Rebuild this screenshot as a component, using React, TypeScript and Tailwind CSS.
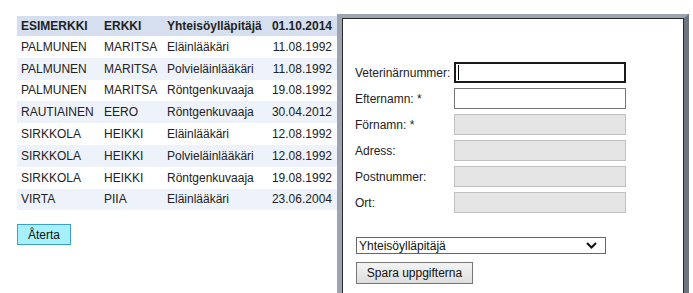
import React from 'react';

const rows = [
  ['PALMUNEN', 'MARITSA', 'Eläinlääkäri', '11.08.1992'],
  ['PALMUNEN', 'MARITSA', 'Polvieläinlääkäri', '11.08.1992'],
  ['PALMUNEN', 'MARITSA', 'Röntgenkuvaaja', '19.08.1992'],
  ['RAUTIAINEN', 'EERO', 'Röntgenkuvaaja', '30.04.2012'],
  ['SIRKKOLA', 'HEIKKI', 'Eläinlääkäri', '12.08.1992'],
  ['SIRKKOLA', 'HEIKKI', 'Polvieläinlääkäri', '12.08.1992'],
  ['SIRKKOLA', 'HEIKKI', 'Röntgenkuvaaja', '19.08.1992'],
  ['VIRTA', 'PIIA', 'Eläinlääkäri', '23.06.2004'],
];

const fields = [
  { label: 'Veterinärnummer:', state: 'focus' },
  { label: 'Efternamn: *', state: 'normal' },
  { label: 'Förnamn: *', state: 'disabled' },
  { label: 'Adress:', state: 'disabled' },
  { label: 'Postnummer:', state: 'disabled' },
  { label: 'Ort:', state: 'disabled' },
];

const Row: React.FC<{ cells: string[]; i: number }> = ({ cells, i }) => (
  <div className={`flex h-[21.8px] items-center ${i % 2 === 1 ? 'bg-[#eef2fa]' : 'bg-white'}`}>
    <div className="w-[83px] pl-1">{cells[0]}</div>
    <div className="w-[63px] pl-1">{cells[1]}</div>
    <div className="w-[104px] pl-1">{cells[2]}</div>
    <div className="w-[70px] pr-[5px] text-right">{cells[3]}</div>
  </div>
);

export default function App() {
  return (
    <div
      className="flex h-[293px] w-[693px] items-start overflow-hidden bg-white text-[12px] text-[#222]"
      style={{ fontFamily: '"Liberation Sans", Arial, sans-serif' }}
    >
      {/* vänster: tabell */}
      <div className="ml-[17px] mt-4 w-[320px]">
        <div className="flex h-5 items-center bg-[#d5dff0] font-bold text-[#1f1f1f]">
          <div className="w-[83px] pl-1">ESIMERKKI</div>
          <div className="w-[63px] pl-1">ERKKI</div>
          <div className="w-[104px] pl-1">Yhteisöylläpitäjä</div>
          <div className="w-[70px] pr-[5px] text-right">01.10.2014</div>
        </div>
        {rows.map((r, i) => (
          <Row key={i} cells={r} i={i} />
        ))}
        <button className="mt-[14px] flex h-[21px] w-[54px] items-center justify-center border border-[#3b9fd0] bg-[#a6f1ff] text-[12px] text-[#111]">
          Återta
        </button>
      </div>

      {/* höger: formulär */}
      <div className="mt-[14px] h-[290px] w-[352px] border-[5px] border-t-[#9ba4b0] border-l-[#9ba4b0] border-r-[#6d7580] border-b-[#6d7580] border-t-4">
        <div className="h-full border-l border-t border-r border-[#2a2a2a] bg-white pl-3 pt-[43px]">
          <div className="flex flex-col gap-[5px]">
            {fields.map((f) => (
              <div key={f.label} className="flex h-[21px] items-center">
                <div className="w-[99px] text-[#222]">{f.label}</div>
                {f.state === 'focus' && (
                  <div className="flex h-[21px] w-[172px] items-center border-2 border-[#1a1a1a] pl-[2px]">
                    <div className="h-[15px] w-px bg-black" />
                  </div>
                )}
                {f.state === 'normal' && <div className="h-[21px] w-[172px] border border-[#777]" />}
                {f.state === 'disabled' && (
                  <div className="h-[21px] w-[172px] border border-[#c0c0c0] bg-[#e5e5e5]" />
                )}
              </div>
            ))}
          </div>

          <div className="ml-px mt-6 flex h-[17px] w-[250px] items-center justify-between border border-[#666] bg-white pl-[2px] pr-[8px] text-[12px] text-[#111]">
            <span>Yhteisöylläpitäjä</span>
            <svg width="11" height="7" viewBox="0 0 11 7" fill="none">
              <path d="M1 1l4.5 4.5L10 1" stroke="#111" strokeWidth="2" />
            </svg>
          </div>

          <button className="ml-px mt-2 flex h-[22px] w-[117px] items-center justify-center border border-[#777] bg-gradient-to-b from-[#f4f4f4] to-[#dedede] text-[12px] text-[#111]">
            Spara uppgifterna
          </button>
        </div>
      </div>
    </div>
  );
}
